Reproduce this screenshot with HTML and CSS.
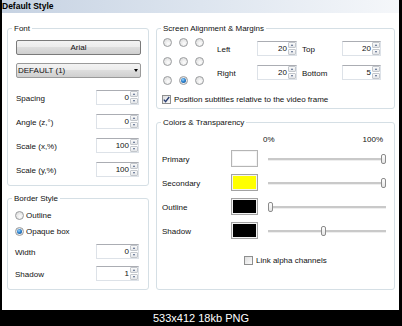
FILE: index.html
```html
<!DOCTYPE html>
<html lang="en">
	<head>
		<meta charset="UTF-8" />
		<meta name="viewport" content="width=device-width, initial-scale=1.0" />
		<title>Default Style</title>
		<link rel="stylesheet" href="styles.css">
	</head>
	<body>
		<div class="shot">
			<div class="titlebar">Default Style</div>
			<div class="dialog">
				<div class="col col-left">
					<div class="group group-font">
						<span class="group-title">Font</span>
						<div class="btn">Arial</div>
						<div class="combo"><span>DEFAULT (1)</span><span class="combo-arrow"></span></div>
						<div class="field first">
							<span class="field-label">Spacing</span>
							<div class="spin"><span class="spin-value">0</span><span class="spin-btns"><i class="up"></i><i class="down"></i></span></div>
						</div>
						<div class="field">
							<span class="field-label">Angle (z,°)</span>
							<div class="spin"><span class="spin-value">0</span><span class="spin-btns"><i class="up"></i><i class="down"></i></span></div>
						</div>
						<div class="field">
							<span class="field-label">Scale (x,%)</span>
							<div class="spin"><span class="spin-value">100</span><span class="spin-btns"><i class="up"></i><i class="down"></i></span></div>
						</div>
						<div class="field">
							<span class="field-label">Scale (y,%)</span>
							<div class="spin"><span class="spin-value">100</span><span class="spin-btns"><i class="up"></i><i class="down"></i></span></div>
						</div>
					</div>

					<div class="group group-border">
						<span class="group-title">Border Style</span>
						<div class="option"><span class="radio"></span>Outline</div>
						<div class="option second"><span class="radio checked"></span>Opaque box</div>
						<div class="field first">
							<span class="field-label">Width</span>
							<div class="spin"><span class="spin-value">0</span><span class="spin-btns"><i class="up"></i><i class="down"></i></span></div>
						</div>
						<div class="field">
							<span class="field-label">Shadow</span>
							<div class="spin"><span class="spin-value">1</span><span class="spin-btns"><i class="up"></i><i class="down"></i></span></div>
						</div>
					</div>
				</div>

				<div class="col col-right">
					<div class="group group-screen">
						<span class="group-title">Screen Alignment &amp; Margins</span>
						<div class="align">
							<div class="align-grid">
								<span class="radio"></span><span class="radio"></span><span class="radio"></span>
								<span class="radio"></span><span class="radio"></span><span class="radio"></span>
								<span class="radio"></span><span class="radio checked"></span><span class="radio"></span>
							</div>
							<div class="margins">
								<span class="m-label">Left</span>
								<div class="spin"><span class="spin-value">20</span><span class="spin-btns"><i class="up"></i><i class="down"></i></span></div>
								<span class="m-label m-label-2">Top</span>
								<div class="spin"><span class="spin-value">20</span><span class="spin-btns"><i class="up"></i><i class="down"></i></span></div>
								<span class="m-label">Right</span>
								<div class="spin"><span class="spin-value">20</span><span class="spin-btns"><i class="up"></i><i class="down"></i></span></div>
								<span class="m-label m-label-2">Bottom</span>
								<div class="spin"><span class="spin-value">5</span><span class="spin-btns"><i class="up"></i><i class="down"></i></span></div>
							</div>
						</div>
						<div class="option check-row">
							<span class="checkbox checked"><svg width="7" height="7" viewBox="0 0 7 7"><polyline points="0.8,3.6 2.6,5.6 6.2,1" fill="none" stroke="#2a3f73" stroke-width="1.4" /></svg></span>
							Position subtitles relative to the video frame
						</div>
					</div>

					<div class="group group-colors">
						<span class="group-title">Colors &amp; Transparency</span>
						<div class="colors-head"><span>0%</span><span>100%</span></div>
						<div class="color-row">
							<span class="color-label">Primary</span>
							<span class="swatch swatch-white"></span>
							<div class="slider"><span class="thumb" style="left: 113px"></span></div>
						</div>
						<div class="color-row">
							<span class="color-label">Secondary</span>
							<span class="swatch swatch-yellow"></span>
							<div class="slider"><span class="thumb" style="left: 113px"></span></div>
						</div>
						<div class="color-row">
							<span class="color-label">Outline</span>
							<span class="swatch swatch-black"></span>
							<div class="slider"><span class="thumb" style="left: 0px"></span></div>
						</div>
						<div class="color-row">
							<span class="color-label">Shadow</span>
							<span class="swatch swatch-black"></span>
							<div class="slider"><span class="thumb" style="left: 53px"></span></div>
						</div>
						<div class="option link-row"><span class="checkbox"></span>Link alpha channels</div>
					</div>
				</div>
			</div>
		</div>
		<div class="caption">533x412 18kb PNG</div>
	</body>
</html>
```

FILE: styles.css
```css
body {
	margin: 0;
	width: 402px;
	height: 326px;
	overflow: hidden;
	background: #000;
	font-family: "Liberation Sans", Arial, sans-serif;
	font-size: 8px;
	color: #111;
}
.shot {
	margin-left: 2px;
	width: 397px;
	height: 310px;
	background: #fff;
	overflow: hidden;
}
.titlebar {
	height: 13px;
	line-height: 13px;
	font-size: 8.5px;
	font-weight: bold;
	color: #000;
	background: linear-gradient(to right, #c6d2e2, #dde5ef 50%, #f5f7fa);
}
.dialog {
	display: flex;
	gap: 7px;
	padding: 15px 0 0 5px;
}
.col {
	display: flex;
	flex-direction: column;
}
.col-left {
	width: 142px;
	gap: 12px;
}
.col-right {
	width: 239px;
	gap: 13px;
}
.group {
	position: relative;
	box-sizing: border-box;
	border: 1px solid #d5dfe5;
	border-radius: 3px;
}
.group-title {
	position: absolute;
	top: -6px;
	left: 4px;
	padding: 0 2px;
	line-height: 11px;
	background: #fff;
	white-space: nowrap;
}
.group-font {
	height: 158px;
	padding: 11px 7px 0 8px;
}
.group-border {
	height: 92px;
	padding: 11px 7px 0 7px;
}
.group-screen {
	height: 81px;
	padding: 9px 5px 0 5px;
}
.group-colors {
	height: 168px;
	padding: 11px 5px 0 5px;
}

/* buttons */
.btn,
.combo {
	box-sizing: border-box;
	height: 15px;
	line-height: 13px;
	border: 1px solid #7a7a7a;
	border-radius: 2px;
	background: linear-gradient(#f3f3f3, #ebebeb 50%, #dddddd 50%, #cfcfcf);
}
.btn {
	text-align: center;
}
.combo {
	margin-top: 8px;
	display: flex;
	justify-content: space-between;
	align-items: center;
	padding: 0 2px 0 1px;
	border-color: #9a9a9a;
}
.combo-arrow {
	width: 0;
	height: 0;
	border-left: 2.5px solid transparent;
	border-right: 2.5px solid transparent;
	border-top: 3px solid #000;
}

/* number fields */
.field {
	display: flex;
	align-items: center;
	margin-top: 9px;
}
.field.first {
	margin-top: 12px;
}
.group-border .field.first {
	margin-top: 7px;
}
.group-border .field {
	margin-top: 7px;
}
.field-label {
	width: 80px;
	line-height: 11px;
	padding-top: 1px;
}
.group-border .field-label {
	width: 81px;
}
.spin {
	box-sizing: border-box;
	display: flex;
	width: 43px;
	height: 15px;
	border: 1px solid #dde2e8;
	border-top-color: #abadb3;
	background: #fff;
}
.spin-value {
	flex: 1;
	text-align: right;
	line-height: 13px;
	padding-right: 1px;
}
.spin-btns {
	display: flex;
	flex-direction: column;
	width: 8px;
	gap: 1px;
}
.spin-btns i {
	flex: 1;
	display: flex;
	align-items: center;
	justify-content: center;
	box-sizing: border-box;
	border: 1px solid #c3c7cc;
	border-radius: 1px;
	background: linear-gradient(#fafafa, #e4e6e9);
}
.spin-btns i::after {
	content: "";
	width: 0;
	height: 0;
	border-left: 1.5px solid transparent;
	border-right: 1.5px solid transparent;
}
.spin-btns .up::after {
	border-bottom: 2px solid #4d6185;
}
.spin-btns .down::after {
	border-top: 2px solid #4d6185;
}

/* radios and checkboxes */
.option {
	display: flex;
	align-items: center;
	gap: 2px;
	line-height: 11px;
}
.option.second {
	margin-top: 5px;
}
.radio {
	box-sizing: border-box;
	width: 9px;
	height: 9px;
	border: 1px solid #9a9c9e;
	border-radius: 50%;
	background: radial-gradient(circle at 60% 65%, #fdfdfd, #e2e2e2 70%);
	display: flex;
	align-items: center;
	justify-content: center;
}
.radio.checked::after {
	content: "";
	width: 5px;
	height: 5px;
	border-radius: 50%;
	background: radial-gradient(circle at 40% 35%, #9fd6ff, #2a82cf 45%, #174a86);
}
.checkbox {
	box-sizing: border-box;
	width: 9px;
	height: 9px;
	border: 1px solid #8e8f8f;
	background: linear-gradient(135deg, #dedede, #fbfbfb);
	display: flex;
	align-items: center;
	justify-content: center;
	margin-right: 1px;
}

/* screen alignment */
.align {
	display: flex;
	align-items: flex-start;
}
.align-grid {
	display: grid;
	grid-template-columns: repeat(3, 9px);
	column-gap: 7px;
	row-gap: 10px;
	margin-left: 1px;
}
.margins {
	display: grid;
	grid-template-columns: 40px 40px 45px 39px;
	row-gap: 9px;
	margin: 3px 0 0 13px;
	align-items: center;
}
.margins .spin {
	width: 100%;
}
.m-label {
	padding-top: 2px;
}
.m-label-2 {
	padding-left: 5px;
}
.check-row {
	margin-top: 9px;
}

/* colors */
.colors-head {
	display: flex;
	justify-content: space-between;
	width: 120px;
	margin-left: 101px;
	line-height: 11px;
}
.color-row {
	display: flex;
	align-items: center;
	height: 17px;
	margin-top: 7px;
}
.colors-head + .color-row {
	margin-top: 5px;
}
.color-label {
	width: 69px;
	padding-top: 1px;
}
.swatch {
	box-sizing: border-box;
	width: 27px;
	height: 17px;
	border: 1px solid #a3a3a3;
	box-shadow: inset 0 0 0 1px #f4f4f4;
}
.swatch-white {
	background: #fff;
	border-color: #b5b5b5;
}
.swatch-yellow {
	background: #ffff00;
}
.swatch-black {
	background: #000;
}
.slider {
	position: relative;
	width: 118px;
	height: 2px;
	margin-left: 10px;
	background: #c9c9c9;
	box-shadow: 0 1px 0 #eeeeee;
}
.thumb {
	position: absolute;
	top: -4px;
	box-sizing: border-box;
	width: 5px;
	height: 10px;
	border: 1px solid #8c8c8c;
	border-radius: 2px;
	background: linear-gradient(#ffffff, #e4e4e4);
}
.link-row {
	margin: 16px 0 0 82px;
}

.caption {
	height: 16px;
	line-height: 16px;
	text-align: center;
	font-size: 11px;
	color: #fff;
	padding-left: 0;
}
```
